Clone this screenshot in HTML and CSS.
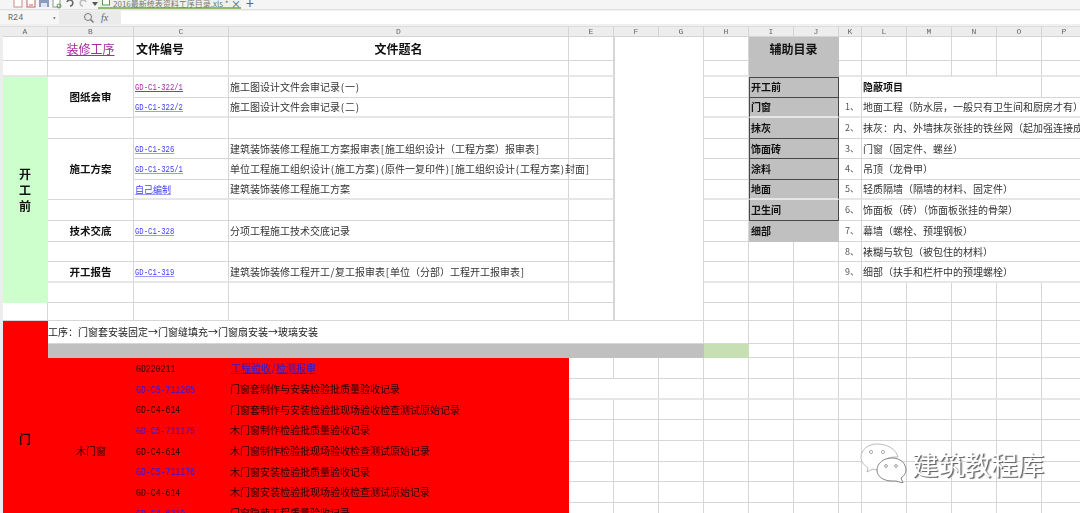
FILE: index.html
```html
<!DOCTYPE html>
<html lang="zh">
<head>
<meta charset="utf-8">
<title>2016最新统表资料工序目录</title>
<link rel="stylesheet" href="styles.css">
</head>
<body>
<div class="tabs">
  <div class="tools">
    <svg class="tool" width="10" height="9" viewBox="0 0 10 9"><rect x="1" y="-4" width="8" height="11" fill="#fff" stroke="#d08a8a"/></svg>
    <svg class="tool" width="10" height="9" viewBox="0 0 10 9"><rect x="1" y="-4" width="8" height="11" fill="#fff" stroke="#c46060"/><path d="M3 5h4" stroke="#c46060"/></svg>
    <svg class="tool" width="10" height="9" viewBox="0 0 10 9"><rect x="0" y="-2" width="10" height="9" fill="#8a9cc0"/><rect x="2" y="3" width="6" height="4" fill="#dfe6f2"/></svg>
    <svg class="tool" width="10" height="9" viewBox="0 0 10 9"><rect x="1" y="-4" width="7" height="11" fill="#fff" stroke="#8a9a8a"/><circle cx="7" cy="6" r="2" fill="none" stroke="#5a9a5a"/></svg>
    <svg class="tool" width="10" height="9" viewBox="0 0 10 9"><path d="M2 2a3 3 0 1 1 3 4" fill="none" stroke="#666" stroke-width="1.5"/></svg>
    <svg class="tool" width="10" height="9" viewBox="0 0 10 9"><path d="M8 2a3 3 0 1 0-3 4" fill="none" stroke="#bbb" stroke-width="1.5"/></svg>
    <svg class="tool" width="8" height="9" viewBox="0 0 8 9"><path d="M1 2h6L4 6z" fill="#555"/></svg>
  </div>
  <div class="tab">
    <svg width="8" height="9" viewBox="0 0 8 9"><rect x=".5" y="-2" width="7" height="9" fill="#fff" stroke="#5a9a5a"/></svg>
    <span class="tab-name">2016最新统表资料工序目录.xls *</span>
    <span class="tab-x">×</span>
  </div>
  <span class="tab-plus">+</span>
</div>
<div class="formula">
  <div class="namebox"><span>R24</span><span class="caret">▾</span></div>
  <div class="fbtns">
    <svg width="11" height="11" viewBox="0 0 11 11"><circle cx="5" cy="5" r="3.5" fill="none" stroke="#777"/><path d="M7.5 7.5l3 3" stroke="#777" stroke-width="1.4"/></svg>
    <span class="fx">fx</span>
  </div>
  <div class="finput"></div>
</div>
<div class="sheet">
<table>
  <colgroup>
    <col class="w45"><col class="w86"><col class="w95"><col class="w340">
    <col class="w45"><col class="w45"><col class="w45"><col class="w45">
    <col class="w45"><col class="w45"><col class="w23">
    <col class="w45"><col class="w45"><col class="w45"><col class="w45"><col class="w45">
  </colgroup>
  <thead>
    <tr class="r10"><th>A</th><th>B</th><th>C</th><th>D</th><th>E</th><th>F</th><th>G</th><th>H</th><th>I</th><th>J</th><th>K</th><th>L</th><th>M</th><th>N</th><th>O</th><th>P</th></tr>
  </thead>
  <tbody>
    <tr class="r24">
      <td></td><td class="c link-p big">装修工序</td><td class="big strong pl2">文件编号</td><td class="c big strong">文件题名</td><td></td>
      <td class="blank" colspan="2" rowspan="14"></td><td></td>
      <td class="gray c big strong top" colspan="2" rowspan="2">辅助目录</td><td></td><td></td><td></td><td></td><td></td><td></td>
    </tr>
    <tr class="r16 tk"><td></td><td></td><td></td><td></td><td></td><td></td><td></td><td></td><td></td><td></td><td></td><td></td></tr>
    <tr class="r21">
      <td class="green c stack" rowspan="11">开<br>工<br>前</td>
      <td class="c strong label" rowspan="2">图纸会审</td><td><span class="code small link-p">GD-C1-322/1</span></td><td class="txt">施工图设计文件会审记录<i>(</i>一<i>)</i></td><td></td><td></td>
      <td class="gray box first" colspan="2">开工前</td><td></td><td class="strong pl" colspan="4">隐蔽项目</td><td></td>
    </tr>
    <tr class="r20 tk">
      <td><span class="code small link">GD-C1-322/2</span></td><td class="txt">施工图设计文件会审记录<i>(</i>二<i>)</i></td><td></td><td></td>
      <td class="gray box" colspan="2">门窗</td><td class="c num">1、</td><td class="pl txt nowrap" colspan="5">地面工程（防水层，一般只有卫生间和厨房才有）</td>
    </tr>
    <tr class="r21">
      <td></td><td></td><td></td><td></td><td></td>
      <td class="gray box" colspan="2">抹灰</td><td class="c num">2、</td><td class="pl txt nowrap clip" colspan="5">抹灰：内、外墙抹灰张挂的铁丝网（起加强连接成</td>
    </tr>
    <tr class="r20">
      <td class="c strong label" rowspan="3">施工方案</td><td><span class="code small link">GD-C1-326</span></td><td class="txt nowrap">建筑装饰装修工程施工方案报审表<i>[</i>施工组织设计（工程方案）报审表<i>]</i></td><td></td><td></td>
      <td class="gray box" colspan="2">饰面砖</td><td class="c num">3、</td><td class="pl txt" colspan="5">门窗（固定件、螺丝）</td>
    </tr>
    <tr class="r21">
      <td><span class="code small link">GD-C1-325/1</span></td><td class="txt nowrap">单位工程施工组织设计<i>(</i>施工方案<i>)</i><i>(</i>原件一复印件<i>)</i><i>[</i>施工组织设计<i>(</i>工程方案<i>)</i>封面<i>]</i></td><td></td><td></td>
      <td class="gray box" colspan="2">涂料</td><td class="c num">4、</td><td class="pl txt" colspan="5">吊顶（龙骨甲）</td>
    </tr>
    <tr class="r20 tk">
      <td><span class="link self">自己编制</span></td><td class="txt">建筑装饰装修工程施工方案</td><td></td><td></td>
      <td class="gray box" colspan="2">地面</td><td class="c num">5、</td><td class="pl txt" colspan="5">轻质隔墙（隔墙的材料、固定件）</td>
    </tr>
    <tr class="r21">
      <td></td><td></td><td></td><td></td><td></td>
      <td class="gray box" colspan="2">卫生间</td><td class="c num">6、</td><td class="pl txt" colspan="5">饰面板（砖）（饰面板张挂的骨架）</td>
    </tr>
    <tr class="r21">
      <td class="c strong label">技术交底</td><td><span class="code small link">GD-C1-328</span></td><td class="txt">分项工程施工技术交底记录</td><td></td><td></td>
      <td class="gray strong pl2" colspan="2">细部</td><td class="c num">7、</td><td class="pl txt" colspan="5">幕墙（螺栓、预埋钢板）</td>
    </tr>
    <tr class="r20">
      <td></td><td></td><td></td><td></td><td></td><td></td><td></td><td class="c num">8、</td><td class="pl txt" colspan="5">裱糊与软包（被包住的材料）</td>
    </tr>
    <tr class="r21 tk">
      <td class="c strong label">开工报告</td><td><span class="code small link">GD-C1-319</span></td><td class="txt nowrap">建筑装饰装修工程开工<i>/</i>复工报审表<i>[</i>单位（分部）工程开工报审表<i>]</i></td><td></td><td></td><td></td><td></td><td class="c num">9、</td><td class="pl txt" colspan="5">细部（扶手和栏杆中的预埋螺栓）</td>
    </tr>
    <tr class="r20">
      <td></td><td></td><td></td><td></td><td></td><td></td><td></td><td></td><td></td><td></td><td></td><td></td><td></td>
    </tr>
    <tr class="r18">
      <td class="plain"></td><td></td><td></td><td></td><td></td><td></td><td></td><td></td><td></td><td></td><td></td><td></td><td></td><td></td>
    </tr>
    <tr class="r23">
      <td class="red c door strong" rowspan="11">门</td>
      <td class="process txt" colspan="6">工序：门窗套安装固定→门窗缝填充→门窗扇安装→玻璃安装</td>
      <td></td><td></td><td></td><td></td><td></td><td></td><td></td><td></td><td></td>
    </tr>
    <tr class="r14">
      <td class="gray" colspan="6"></td><td class="lime"></td>
      <td></td><td></td><td></td><td></td><td></td><td></td><td></td><td></td>
    </tr>
    <tr class="r21">
      <td class="red c" rowspan="9">木门窗</td><td class="red"><span class="code">GD220211</span></td><td class="red"><span class="deep">工程验收<i>/</i>检测报审</span></td>
      <td></td><td></td><td></td><td></td><td></td><td></td><td></td><td></td><td></td><td></td><td></td><td></td>
    </tr>
    <tr class="r21 tk">
      <td class="red"><span class="code blue">GD-C5-711205</span></td><td class="red">门窗套制作与安装检验批质量验收记录</td>
      <td colspan="2"></td><td></td><td></td><td></td><td></td><td></td><td></td><td></td><td></td><td></td><td></td><td></td>
    </tr>
    <tr class="r20">
      <td class="red"><span class="code">GD-C4-614</span></td><td class="red">门窗套制作与安装检验批现场验收检查测试原始记录</td>
      <td></td><td></td><td></td><td></td><td></td><td></td><td></td><td></td><td></td><td></td><td></td><td></td>
    </tr>
    <tr class="r21">
      <td class="red"><span class="code blue">GD-C5-711175</span></td><td class="red">木门窗制作检验批质量验收记录</td>
      <td></td><td></td><td></td><td></td><td></td><td></td><td></td><td></td><td></td><td></td><td></td><td></td>
    </tr>
    <tr class="r21">
      <td class="red"><span class="code">GD-C4-614</span></td><td class="red">木门窗制作检验批现场验收检查测试原始记录</td>
      <td></td><td></td><td></td><td></td><td></td><td></td><td></td><td></td><td></td><td></td><td></td><td></td>
    </tr>
    <tr class="r20">
      <td class="red"><span class="code blue">GD-C5-711176</span></td><td class="red">木门窗安装检验批质量验收记录</td>
      <td></td><td></td><td></td><td></td><td></td><td></td><td></td><td></td><td></td><td></td><td></td><td></td>
    </tr>
    <tr class="r21">
      <td class="red"><span class="code">GD-C4-614</span></td><td class="red">木门窗安装检验批现场验收检查测试原始记录</td>
      <td></td><td></td><td></td><td></td><td></td><td></td><td></td><td></td><td></td><td></td><td></td><td></td>
    </tr>
    <tr class="r21 tk">
      <td class="red"><span class="code blue">GD-C4-6310</span></td><td class="red">门窗隐蔽工程质量验收记录</td>
      <td></td><td></td><td></td><td></td><td></td><td></td><td></td><td></td><td></td><td></td><td></td><td></td>
    </tr>
    <tr class="r21">
      <td class="red"></td><td class="red"></td>
      <td></td><td></td><td></td><td></td><td></td><td></td><td></td><td></td><td></td><td></td><td></td><td></td>
    </tr>
  </tbody>
</table>
<div class="wm">
  <svg width="48" height="40" viewBox="0 0 48 40">
    <path d="M17 1C8 1 1 7 1 14c0 5 3 8 7 11l-1 4 6-3c1 0 3 1 4 1h4c-1-8 6-14 17-13C36 6 27 1 17 1z" fill="#fff" stroke="#aaa" stroke-width=".8"/>
    <circle cx="11" cy="9" r="1.6" fill="#fff" stroke="#888" stroke-width=".7"/><circle cx="23" cy="9" r="1.6" fill="#fff" stroke="#888" stroke-width=".7"/>
    <path d="M32 15c-8 0-15 5-15 12s7 11 15 11c2 0 3 0 4 0l7 2-2-5c3-2 5-5 5-8 0-7-6-12-14-12z" fill="#fff" stroke="#777" stroke-width=".9"/>
    <circle cx="26" cy="23" r="1.4" fill="#fff" stroke="#777" stroke-width=".7"/><circle cx="36" cy="23" r="1.4" fill="#fff" stroke="#777" stroke-width=".7"/>
  </svg>
  <span class="wm-text">建筑教程库</span>
</div>
</div>
</body>
</html>
```

FILE: styles.css
```css
* { box-sizing: border-box; }
html, body { margin: 0; padding: 0; width: 1080px; height: 513px; overflow: hidden; background: #fff; }
body { font-family: "Noto Sans CJK SC", sans-serif; font-size: 10px; color: #222; }

.tabs { height: 10px; background: #f5f5f5; border-bottom: 1px solid #e0e0e0; display: flex; align-items: flex-start; padding-left: 13px; }
.tools { display: flex; gap: 3px; width: 85px; }
.tool { flex: none; }
.tab { width: 143px; height: 9px; background: #eef2ea; border-bottom: 2px solid #8fbb6c; display: flex; align-items: flex-end; gap: 3px; padding-left: 4px; }
.tab-name { font-size: 8px; line-height: 7px; color: #777; white-space: nowrap; width: 115px; height: 7px; }
.tab-x { font-size: 10px; line-height: 7px; color: #555; height: 7px; }
.tab-plus { font-size: 14px; line-height: 7px; color: #666; margin-left: 5px; }

.formula { height: 17px; display: flex; background: #f0f0f0; padding: 1px 0 2px; border-bottom: 1px solid #dcdcdc; }
.namebox { width: 59px; display: flex; justify-content: space-between; align-items: center; padding: 0 3px 0 8px; background: #f6f6f6; font: 8.5px "Liberation Mono", monospace; color: #666; }
.caret { font-size: 6px; }
.fbtns { width: 62px; display: flex; align-items: center; gap: 7px; padding-left: 24px; background: #ebebeb; }
.fx { font: italic 10px "Liberation Serif", serif; color: #666; }
.finput { flex: 1; background: #fff; }

.sheet { position: relative; padding-left: 3px; background: #ededed; filter: blur(.35px); height: 486px; overflow: hidden; }
table { table-layout: fixed; border-collapse: separate; border-spacing: 0; width: 1083px; background: #fff; }
.w45 { width: 45px; } .w86 { width: 86px; } .w95 { width: 95px; } .w340 { width: 340px; } .w23 { width: 23px; }
th { background: #ededed; font: 400 8px/9px "Liberation Mono", monospace; color: #666; padding: 0; border-right: 1px solid #d4d4d4; border-bottom: 1px solid #d4d4d4; }
td { padding: 0; border-right: 1px solid #d6d6d6; border-bottom: 1px solid #d6d6d6; line-height: 12px; font-size: 10px; color: #222; overflow: visible; vertical-align: middle; white-space: nowrap; }
.r10 { height: 10px; } .r14 { height: 14px; } .r16 { height: 16px; } .r18 { height: 18px; }
.r20 { height: 20px; } .r21 { height: 21px; } .r23 { height: 23px; } .r24 { height: 24px; }
tr.tk > td:not(.red) { border-bottom: 2px solid #e6e6e6; }

.c { text-align: center; }
.strong { font-weight: 700; color: #111; }
.label { font-size: 10.5px; }
.big { font-size: 12px; }
.txt { padding-left: 1px; color: #333; }
.txt i, .deep i { font-style: normal; display: inline-block; width: 5px; text-align: center; }
.pl { padding-left: 1px; }
.pl2 { padding-left: 2px; }
.num { font-size: 9px; color: #555; text-align: right; padding-right: 2px; }
.nowrap { white-space: nowrap; }
.clip { overflow: hidden; }

.code { display: inline-block; font: 10.5px/12px "Liberation Mono", monospace; margin-left: 1px; transform: scaleX(.78); transform-origin: left center; }
.code.small { font-size: 9.5px; transform: scaleX(.765); }
.link { color: #3b3bf5; text-decoration: underline; text-decoration-color: #9a9af8; }
.link-p { color: #a52ba5; text-decoration: underline; }
.self { padding-left: 1px; font-size: 9px; }
.blue { color: #2a18e8; }
.deep { color: #2020d8; text-decoration: underline; padding-left: 1px; }

.blank { border-left: 1px solid #d6d6d6; }
.green { background: #ccffcc; border-color: #ccffcc; }
.stack { font-size: 12px; line-height: 16px; font-weight: 700; color: #111; }
.plain { border-right-color: #d6d6d6; }
.gray { background: #c0c0c0; border-color: #c0c0c0; color: #111; }
.top { vertical-align: top; padding-top: 6px; }
.box { border: 1px solid #474747; border-top: 0; font-weight: 700; padding-left: 1px; }
.box.first { border-top: 1px solid #474747; padding-bottom: 2px; }
.lime { background: #c6e0b4; border-color: #c6e0b4; }
.red { background: #ff0000; border-color: #ff0000; color: #200000; padding-left: 1px; }
.door { font-size: 12px; padding-top: 12px; padding-left: 0; }
.process { padding-left: 0; color: #222; }

.wm { position: absolute; left: 860px; top: 416px; display: flex; align-items: flex-start; gap: 4px; }
.wm-text { font-size: 26.4px; line-height: 34px; margin-top: 4px; color: #fff; text-shadow: 1px 1px 0 #6a6a6a, 2px 1px 1px #aaa; }
```
